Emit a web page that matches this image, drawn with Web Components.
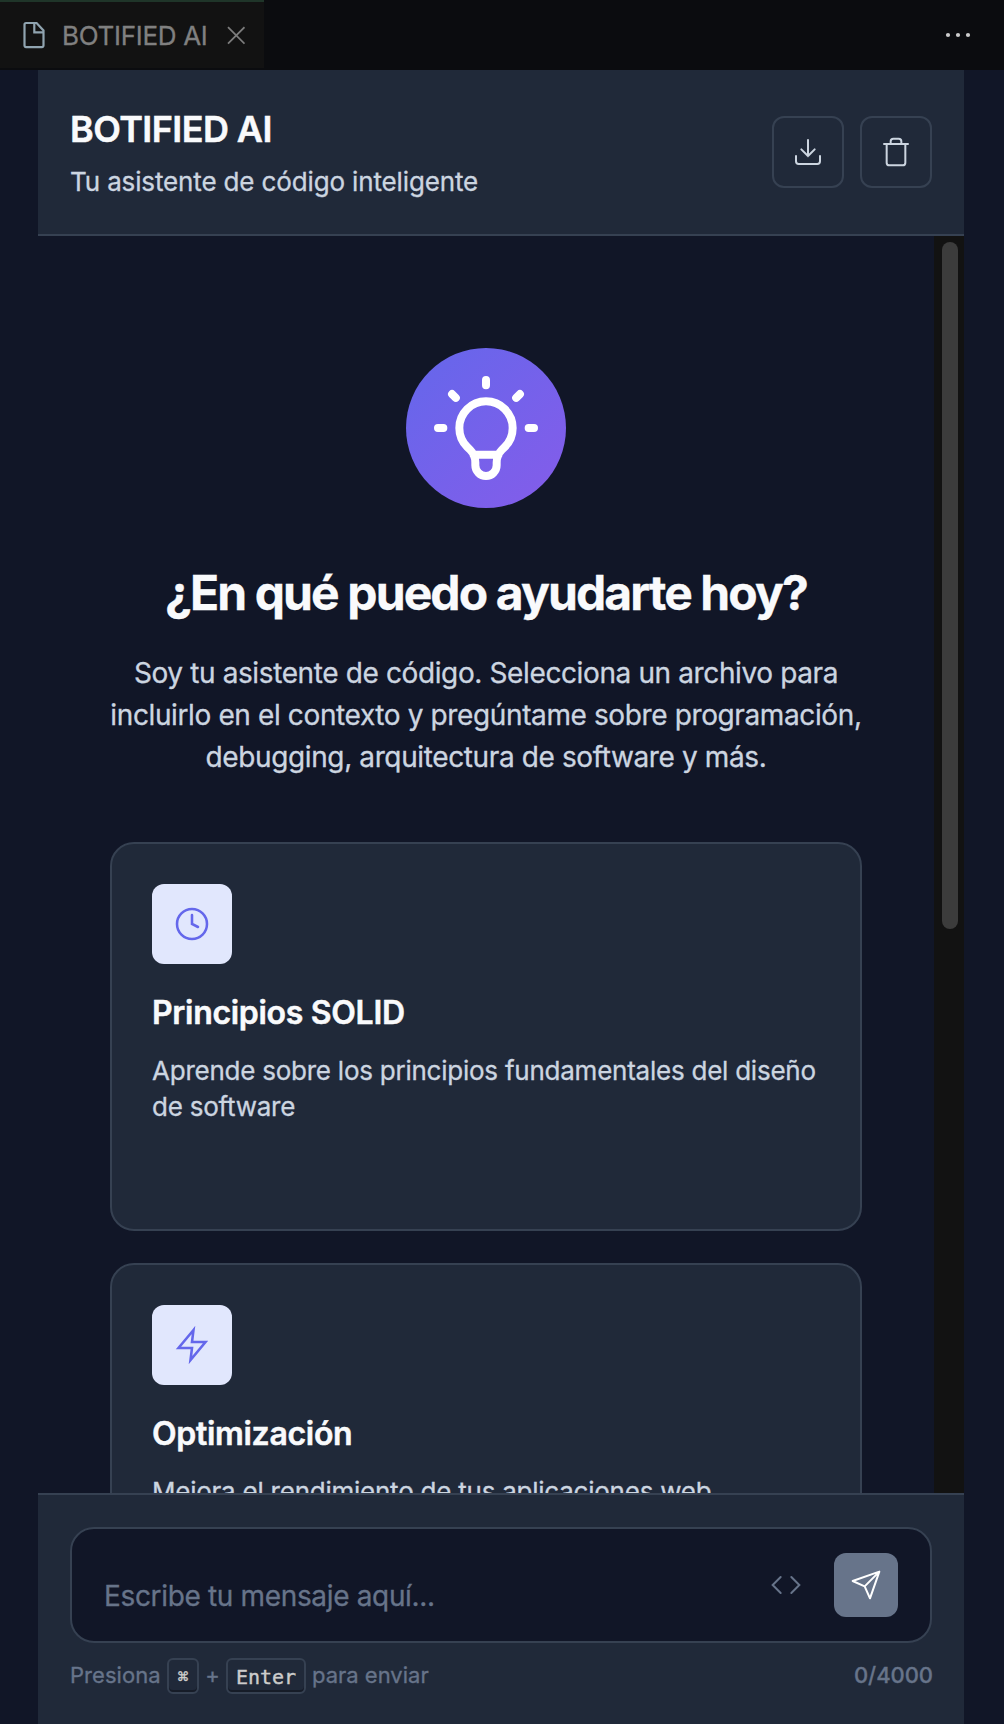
<!DOCTYPE html>
<html lang="es">
<head>
<meta charset="utf-8">
<title>BOTIFIED AI</title>
<style>
  :root {
    --bg: #111627; --panel: #202939; --line: #364152;
    --text: #f9fafc; --soft: #ccd5e0; --muted: #67748a; --accent: #6467eb;
  }
  body { margin: 0; background: var(--bg); font-family: Inter, "Liberation Sans", sans-serif; -webkit-text-stroke: 0.3px; }
</style>
</head>
<body>
<assistant-app></assistant-app>
<script>
const define = (name, html) => customElements.define(name, class extends HTMLElement {
  constructor() {
    super();
    const t = document.createElement('template');
    t.innerHTML = html;
    this.attachShadow({ mode: 'open' }).append(t.content.cloneNode(true));
  }
});

const ICONS = {
  download: '<path d="M21 15v4a2 2 0 0 1-2 2H5a2 2 0 0 1-2-2v-4"/><path d="M7 10l5 5 5-5M12 15V3"/>',
  trash: '<path d="M3 6h18M19 6v14a2 2 0 0 1-2 2H7a2 2 0 0 1-2-2V6m3 0V4a2 2 0 0 1 2-2h4a2 2 0 0 1 2 2v2"/>',
  clock: '<circle cx="12" cy="12" r="10"/><path d="M12 6v6l4 2"/>',
  bolt: '<path d="M13 2L3 14h9l-1 8 10-12h-9l1-8z"/>',
  code: '<path d="M16 18l6-6-6-6M8 6l-6 6 6 6"/>',
  send: '<path stroke-linejoin="round" d="M22 2L11 13M22 2l-7 20-4-9-9-4 20-7z"/>',
  bulb: '<path stroke-linejoin="round" d="M9.663 17h4.673M12 3v1m6.364 1.636l-.707.707M21 12h-1M4 12H3m3.343-5.657l-.707-.707m2.828 9.9a5 5 0 117.072 0l-.548.547A3.374 3.374 0 0014 18.469V19a2 2 0 11-4 0v-.531c0-.895-.356-1.754-.988-2.386l-.548-.547z"/>'
};
customElements.define('line-icon', class extends HTMLElement {
  connectedCallback() {
    if (this.shadowRoot) return;
    const size = this.getAttribute('size') || 32;
    const weight = this.getAttribute('weight') || 1.5;
    this.attachShadow({ mode: 'open' }).innerHTML = `
      <style>:host{display:block;flex:none;width:${size}px;height:${size}px} svg{display:block;overflow:visible}</style>
      <svg width="${size}" height="${size}" viewBox="0 0 24 24" fill="none" stroke="currentColor"
        stroke-width="${weight}" stroke-linecap="round">${ICONS[this.getAttribute('name')]}</svg>`;
  }
});

define('editor-tabs', `
  <style>
    :host { display: flex; justify-content: space-between; height: 70px; background: #0b0c0f; flex: none; }
    .tab { display: flex; align-items: center; box-sizing: border-box; width: 264px; height: 68px;
      padding: 0 0 0 22px; border-top: 2px solid #1f3529; background: #121212; }
    svg { display: block; flex: none; }
    span { width: 147px; margin: 2px 16px 0 16px; font-size: 26px; line-height: 34px; letter-spacing: -0.3px;
      color: #808080; white-space: nowrap; }
    .more { margin: 30px 33px 0 0; }
  </style>
  <div class="tab">
    <svg width="24" height="30" viewBox="0 0 24 30" fill="none" stroke="#90a4b0" stroke-width="2.200"><path d="M4 3h10.600L21.500 10.400V25.600a1.500 1.500 0 0 1-1.500 1.500H4a1.500 1.500 0 0 1-1.500-1.500V4.500A1.500 1.500 0 0 1 4 3zM12.300 3v9.400H22"/></svg>
    <span>BOTIFIED AI</span>
    <svg width="20" height="20" viewBox="0 0 20 20" stroke="#7c7c7c" stroke-width="1.800"><path d="M3 2.200L19.500 18.700M19.500 2.200L3 18.700"/></svg>
  </div>
  <svg class="more" width="26" height="10" viewBox="0 0 26 10" fill="#cccccc"><circle cx="3" cy="5" r="2.100"/><circle cx="13" cy="5" r="2.100"/><circle cx="23" cy="5" r="2.100"/></svg>
`);

define('icon-button', `
  <style>
    :host { display: flex; align-items: center; justify-content: center; box-sizing: border-box; width: 72px;
      height: 72px; border: 2px solid var(--line); border-radius: 12px; color: var(--soft); }
  </style><slot></slot>
`);

define('assistant-header', `
  <style>
    :host { display: flex; align-items: center; justify-content: space-between; box-sizing: border-box; flex: none;
      height: 166px; padding: 0 32px; background: var(--panel); border-bottom: 2px solid var(--line); }
    .copy { padding-top: 5px; white-space: nowrap; }
    h1 { margin: 0 0 11px; font-size: 36px; line-height: 44px; font-weight: 600; letter-spacing: -0.57px; color: var(--text); -webkit-text-stroke: 0.5px; }
    p { margin: 0; font-size: 26px; line-height: 40px; letter-spacing: -0.14px; color: var(--soft); }
    .actions { display: flex; gap: 16px; }
  </style>
  <div class="copy"><h1>BOTIFIED AI</h1><p>Tu asistente de código inteligente</p></div>
  <div class="actions">
    <icon-button><line-icon name="download"></line-icon></icon-button>
    <icon-button><line-icon name="trash"></line-icon></icon-button>
  </div>
`);

define('topic-card', `
  <style>
    :host { display: block; box-sizing: border-box; height: 389px; flex: none; padding: 40px;
      border: 2px solid var(--line); border-radius: 24px; background: var(--panel); }
    .tile { display: flex; align-items: center; justify-content: center; width: 80px; height: 80px;
      border-radius: 12px; background: #e1e7fd; color: var(--accent); }
    h3 { margin: 29px 0 20px; font-size: 32px; line-height: 40px; font-weight: 600; letter-spacing: -0.3px; color: var(--text); -webkit-text-stroke: 0.5px; }
    p { margin: 0; font-size: 26px; line-height: 36.4px; letter-spacing: -0.24px; color: var(--soft); white-space: nowrap; }
  </style>
  <div class="tile"><slot name="icon"></slot></div>
  <h3><slot name="title"></slot></h3>
  <p><slot></slot></p>
`);

define('welcome-panel', `
  <style>
    :host { display: flex; flex-direction: column; align-items: center; flex: 1; min-width: 0; overflow: hidden;
      padding: 112px 72px 0; box-sizing: border-box; }
    .badge { display: flex; align-items: center; justify-content: center; flex: none; width: 160px; height: 160px;
      border-radius: 50%; color: #fff; background: linear-gradient(135deg, #6467eb, #855cea); }
    h2 { margin: 56px 0 30px; font-size: 48px; line-height: 58px; font-weight: 700; letter-spacing: -1.88px;
      color: var(--text); white-space: nowrap; }
    p { margin: 0 0 64px; font-size: 28px; line-height: 42px; letter-spacing: -0.38px; text-align: center;
      color: var(--soft); white-space: nowrap; }
    .cards { display: flex; flex-direction: column; gap: 32px; align-self: stretch; }
  </style>
  <div class="badge"><line-icon name="bulb" size="128"></line-icon></div>
  <h2>¿En qué puedo ayudarte hoy?</h2>
  <p>Soy tu asistente de código. Selecciona un archivo para<br>incluirlo en el contexto y pregúntame sobre programación,<br>debugging, arquitectura de software y más.</p>
  <div class="cards">
    <topic-card><line-icon slot="icon" name="clock" size="36" weight="1.7"></line-icon><span slot="title">Principios SOLID</span>Aprende sobre los principios fundamentales del diseño<br>de software</topic-card>
    <topic-card><line-icon slot="icon" name="bolt" size="36" weight="1.7"></line-icon><span slot="title">Optimización</span>Mejora el rendimiento de tus aplicaciones web</topic-card>
  </div>
`);

define('scroll-track', `
  <style>
    :host { display: block; box-sizing: border-box; flex: none; width: 30px; padding: 6px 6px 0 8px; background: #121212; }
    div { height: 687px; border-radius: 8px; background: #3c3c3c; }
  </style><div></div>
`);

define('key-cap', `
  <style>
    :host { display: flex; align-items: center; justify-content: center; box-sizing: border-box; height: 36px; padding-top: 1px;
      border: 2px solid var(--line); border-radius: 6px; box-shadow: inset 0 -2px 0 #161c28;
      font: 20px/28px "DejaVu Sans Mono", "Liberation Mono", monospace; color: #cccccc; -webkit-text-stroke: 0.4px; }
  </style><slot></slot>
`);

define('message-composer', `
  <style>
    :host { display: block; box-sizing: border-box; flex: none; height: 231px; padding: 32px 32px 0;
      background: var(--panel); border-top: 2px solid var(--line); color: var(--muted); }
    .box { display: flex; align-items: center; box-sizing: border-box; height: 116px; padding: 0 32px;
      border: 2px solid var(--line); border-radius: 24px; background: var(--bg); }
    .input { flex: 1; padding-top: 22px; font-size: 28px; line-height: 42px; letter-spacing: -0.34px; white-space: nowrap; }
    .send { display: flex; align-items: center; justify-content: center; width: 64px; height: 64px; margin-left: 32px;
      border-radius: 12px; background: var(--muted); color: #fff; }
    .meta { display: flex; justify-content: space-between; align-items: center; height: 36px; margin-top: 15px;
      font-size: 22px; line-height: 34px; white-space: nowrap; }
    .hint { display: flex; align-items: center; }
    .first { width: 97px; letter-spacing: 0.05px; }
    .plus { width: 27px; text-align: center; }
    .cmd { width: 32px; font-size: 18px; }
    .enter { width: 80px; }
    .last { margin-left: 6px; }
    .count { font-weight: 500; letter-spacing: -0.05px; margin-right: -1px; }
    .first, .plus, .last, .count { margin-bottom: 2px; }
  </style>
  <div class="box">
    <div class="input">Escribe tu mensaje aquí...</div>
    <line-icon name="code"></line-icon>
    <div class="send"><line-icon name="send"></line-icon></div>
  </div>
  <div class="meta">
    <div class="hint">
      <span class="first">Presiona</span><key-cap class="cmd">⌘</key-cap><span class="plus">+</span><key-cap class="enter">Enter</key-cap><span class="last">para enviar</span>
    </div>
    <span class="count">0/4000</span>
  </div>
`);

define('assistant-app', `
  <style>
    :host { display: flex; flex-direction: column; height: 1724px; overflow: hidden; background: var(--bg); }
    main { display: flex; flex-direction: column; flex: 1; min-height: 0; margin: 0 40px 0 38px; }
    .body { display: flex; flex: 1; min-height: 0; }
  </style>
  <editor-tabs></editor-tabs>
  <main>
    <assistant-header></assistant-header>
    <div class="body"><welcome-panel></welcome-panel><scroll-track></scroll-track></div>
    <message-composer></message-composer>
  </main>
`);
</script>
</body>
</html>
